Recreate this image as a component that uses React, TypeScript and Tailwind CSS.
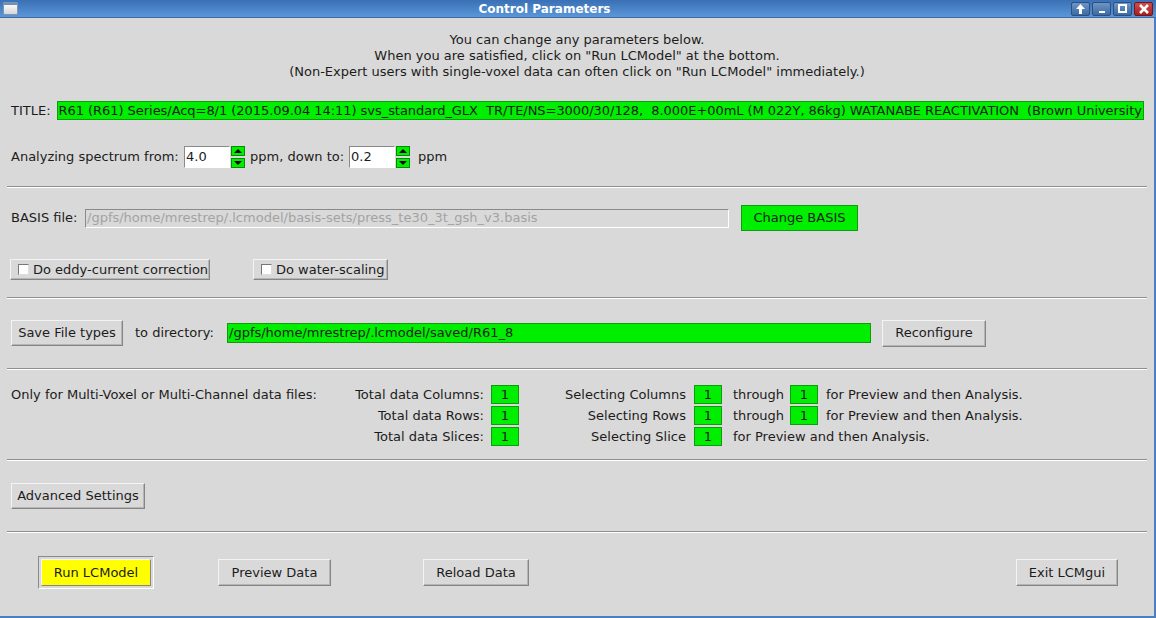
import React from "react";

const font = { fontFamily: '"DejaVu Sans", Verdana, sans-serif' };

const raised =
  "border border-t-[#f4f4f4] border-l-[#f4f4f4] border-b-[#858585] border-r-[#858585] shadow-[inset_-1px_-1px_0_#b5b5b5]";

function Separator({ mt }: { mt: string }) {
  return (
    <div className={`${mt} mx-[7px] h-[2px] border-t border-t-[#8f8f8f] border-b border-b-white`} />
  );
}

function Button({
  label,
  className = "",
}: {
  label: string;
  className?: string;
}) {
  return (
    <div
      className={`${raised} flex items-center justify-center bg-[#d9d9d9] text-[13px] text-[#1c1c1c] ${className}`}
    >
      {label}
    </div>
  );
}

function Spinner() {
  return (
    <div className="ml-[1px] flex h-[22px] w-[14px] flex-col justify-between">
      <div className="flex h-[10px] items-center justify-center border border-[#0a8a0a] bg-[#00ee00]">
        <div className="h-0 w-0 border-x-[4px] border-b-[4px] border-x-transparent border-b-black" />
      </div>
      <div className="flex h-[10px] items-center justify-center border border-[#0a8a0a] bg-[#00ee00]">
        <div className="h-0 w-0 border-x-[4px] border-t-[4px] border-x-transparent border-t-black" />
      </div>
    </div>
  );
}

function NumInput({ value }: { value: string }) {
  return (
    <div className="flex h-[22px] w-[46px] items-center border border-t-[#8a8a8a] border-l-[#8a8a8a] border-b-white border-r-white bg-white pl-[1px] text-[13px]">
      {value}
    </div>
  );
}

function GreenBox() {
  return (
    <div className="flex h-[19px] w-[28px] items-center justify-center border border-[#0f9a0f] bg-[#00ee00] text-[13px] text-[#1c1c1c]">
      1
    </div>
  );
}

function CheckButton({ label, className }: { label: string; className: string }) {
  return (
    <div className={`${raised} flex h-[21px] items-center bg-[#d9d9d9] pl-[7px] text-[13px] text-[#1c1c1c] ${className}`}>
      <div className="mr-[4px] h-[11px] w-[11px] border border-t-[#777] border-l-[#777] border-b-[#ddd] border-r-[#ddd] bg-white" />
      {label}
    </div>
  );
}

function WinButton({ children, red }: { children: React.ReactNode; red?: boolean }) {
  return (
    <div
      className={`flex h-[14px] w-[19px] items-center justify-center rounded-[2px] border ${
        red
          ? "border-[#6e1a1a] bg-gradient-to-b from-[#d24a4a] to-[#a71f1f]"
          : "border-[#2c4f7e] bg-gradient-to-b from-[#6d95c6] to-[#3c6aa3]"
      }`}
    >
      {children}
    </div>
  );
}

export default function App() {
  return (
    <div className="h-[618px] w-[1156px] overflow-hidden bg-[#d9d9d9] text-[#1c1c1c]" style={font}>
      {/* title bar */}
      <div className="relative flex h-[18px] items-center border-b border-b-[#3b6aa6] bg-gradient-to-b from-[#3a70b5] to-[#5a97d8]">
        <div className="ml-[3px] h-[13px] w-[15px] rounded-[1px] border border-[#7b95b7] bg-gradient-to-b from-white to-[#d6d6d6] shadow-[inset_0_2px_0_#6f8fb9]" />
        <div className="flex-1 text-center text-[12px] font-bold text-white">Control Parameters</div>
        <div className="mr-[3px] flex gap-[2px]">
          <WinButton>
            <svg width="11" height="10" viewBox="0 0 11 10">
              <path d="M5.5 0 L10 5 H7 V10 H4 V5 H1 Z" fill="white" />
            </svg>
          </WinButton>
          <WinButton>
            <div className="mt-[6px] h-[2px] w-[6px] bg-white" />
          </WinButton>
          <WinButton>
            <div className="h-[9px] w-[9px] border-2 border-white" />
          </WinButton>
          <WinButton red>
            <svg width="10" height="10" viewBox="0 0 10 10">
              <path d="M1 1 L9 9 M9 1 L1 9" stroke="white" strokeWidth="2.6" />
            </svg>
          </WinButton>
        </div>
      </div>

      {/* body */}
      <div className="flex h-[600px] flex-col border-r-2 border-b-2 border-[#4a7fc0]">
        <div className="pt-[14px] text-center text-[13px] leading-[16px]">
          <div>You can change any parameters below.</div>
          <div>When you are satisfied, click on "Run LCModel" at the bottom.</div>
          <div>(Non-Expert users with single-voxel data can often click on "Run LCModel" immediately.)</div>
        </div>

        {/* TITLE */}
        <div className="mt-[21px] flex h-[19px] items-center pl-[11px] pr-[10px] text-[13px]">
          <span className="mr-[6px]">TITLE:</span>
          <div className="flex h-[19px] flex-1 items-center overflow-hidden whitespace-pre border border-[#0f9a0f] bg-[#00ee00] pl-[1px] tracking-[-0.05px]">
            R61 (R61) Series/Acq=8/1 (2015.09.04 14:11) svs_standard_GLX  TR/TE/NS=3000/30/128,  8.000E+00mL (M 022Y, 86kg) WATANABE REACTIVATION  (Brown University)
          </div>
        </div>

        {/* range */}
        <div className="mt-[26px] flex h-[22px] items-center pl-[11px] text-[13px]">
          <span className="w-[173px]">Analyzing spectrum from:</span>
          <NumInput value="4.0" />
          <Spinner />
          <span className="ml-[5px] w-[99px]">ppm, down to:</span>
          <NumInput value="0.2" />
          <Spinner />
          <span className="ml-[8px]">ppm</span>
        </div>

        <Separator mt="mt-[18px]" />

        {/* BASIS */}
        <div className="mt-[17px] flex h-[26px] items-center pl-[11px] text-[13px]">
          <span className="w-[74px]">BASIS file:</span>
          <div className="flex h-[19px] w-[644px] items-center overflow-hidden whitespace-pre border border-t-[#8a8a8a] border-l-[#8a8a8a] border-b-white border-r-white pl-[1px] text-[#a3a3a3]">
            /gpfs/home/mrestrep/.lcmodel/basis-sets/press_te30_3t_gsh_v3.basis
          </div>
          <div className="ml-[12px] flex h-[26px] w-[117px] items-center justify-center border border-[#0f9a0f] bg-[#00ee00]">
            Change BASIS
          </div>
        </div>

        {/* checkboxes */}
        <div className="mt-[28px] flex items-center pl-[10px]">
          <CheckButton label="Do eddy-current correction" className="w-[200px]" />
          <CheckButton label="Do water-scaling" className="ml-[43px] w-[135px]" />
        </div>

        <Separator mt="mt-[17px]" />

        {/* save */}
        <div className="mt-[21px] flex h-[26px] items-center pl-[11px] text-[13px]">
          <Button label="Save File types" className="h-[26px] w-[112px]" />
          <span className="ml-[12px] w-[92px]">to directory:</span>
          <div className="flex h-[20px] w-[644px] items-center border border-[#0f9a0f] bg-[#00ee00] pl-[1px]">
            /gpfs/home/mrestrep/.lcmodel/saved/R61_8
          </div>
          <Button label="Reconfigure" className="ml-[11px] h-[27px] w-[104px]" />
        </div>

        <Separator mt="mt-[22px]" />

        {/* multi */}
        <div className="mt-[15px] flex flex-col gap-[2px] pl-[11px] text-[13px]">
          {[
            { l: "Total data Columns:", s: "Selecting Columns", thru: true, first: true },
            { l: "Total data Rows:", s: "Selecting Rows", thru: true },
            { l: "Total data Slices:", s: "Selecting Slice", thru: false },
          ].map((r) => (
            <div key={r.l} className="flex h-[19px] items-center">
              <div className="flex w-[473px] justify-between">
                <span>{r.first ? "Only for Multi-Voxel or Multi-Channel data files:" : ""}</span>
                <span>{r.l}</span>
              </div>
              <div className="ml-[7px]">
                <GreenBox />
              </div>
              <span className="w-[167px] text-right">{r.s}</span>
              <div className="ml-[8px]">
                <GreenBox />
              </div>
              {r.thru ? (
                <>
                  <span className="ml-[11px] w-[57px]">through</span>
                  <GreenBox />
                  <span className="ml-[8px]">for Preview and then Analysis.</span>
                </>
              ) : (
                <span className="ml-[11px]">for Preview and then Analysis.</span>
              )}
            </div>
          ))}
        </div>

        <Separator mt="mt-[13px]" />

        <div className="mt-[22px] pl-[11px]">
          <Button label="Advanced Settings" className="h-[26px] w-[134px]" />
        </div>

        <Separator mt="mt-[22px]" />

        {/* bottom buttons */}
        <div className="mt-[23px] flex items-center text-[13px]">
          <div className="ml-[38px] flex h-[33px] w-[116px] items-center justify-center border border-t-[#8a8a8a] border-l-[#8a8a8a] border-b-white border-r-white">
            <div className="flex h-[27px] w-[110px] items-center justify-center border border-t-[#f4f4f4] border-l-[#f4f4f4] border-b-[#858585] border-r-[#858585] bg-[#ffff00]">
              Run LCModel
            </div>
          </div>
          <Button label="Preview Data" className="ml-[64px] h-[27px] w-[113px]" />
          <Button label="Reload Data" className="ml-[92px] h-[27px] w-[106px]" />
          <Button label="Exit LCMgui" className="ml-auto mr-[36px] h-[27px] w-[102px]" />
        </div>
      </div>
    </div>
  );
}
